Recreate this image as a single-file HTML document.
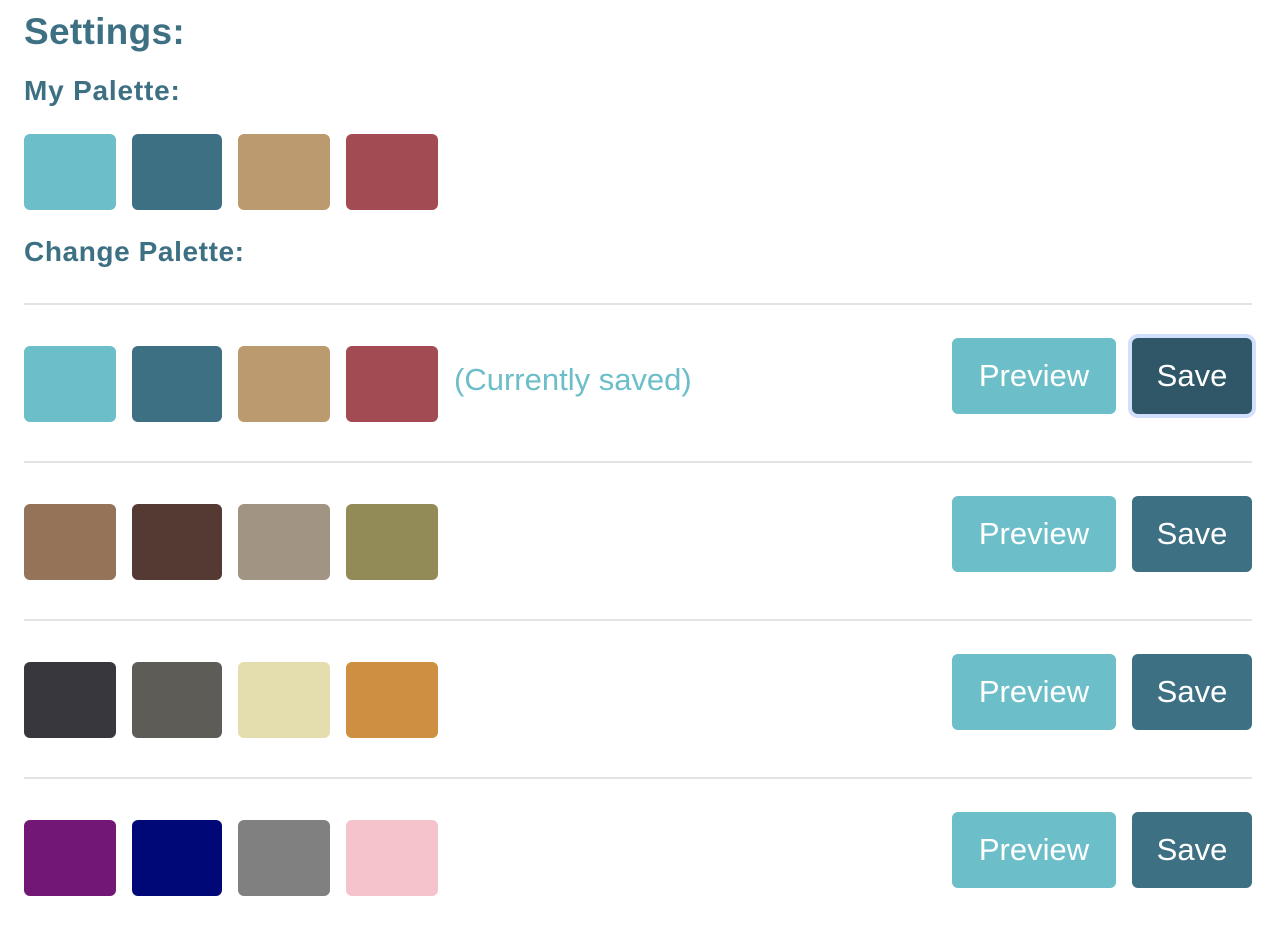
<!DOCTYPE html>
<html><head><style>
body{margin:0;width:1278px;height:926px;background:#fff;font-family:"Liberation Sans",sans-serif;position:relative;overflow:hidden}
.a{position:absolute}
h{position:absolute;left:24px;color:#3d7083;font-weight:bold;white-space:nowrap}
.s{position:absolute;height:76px;border-radius:6px}
.hr{position:absolute;left:24px;width:1228px;height:2px;background:#e3e3e3}
.b{position:absolute;height:76px;border-radius:6px;color:#fff;font-size:31px;display:flex;align-items:center;justify-content:center}
.p{width:164px;left:952px;background:#6cbec9}
.v{width:120px;left:1132px;background:#3d7083}
</style></head><body>
<h style="top:11px;font-size:37px;letter-spacing:0.3px">Settings:</h>
<h style="top:75px;font-size:28px;letter-spacing:0.8px">My Palette:</h>
<div class="s" style="left:24px;top:134px;width:92px;background:#6cbec9"></div>
<div class="s" style="left:132px;top:134px;width:90px;background:#3d7083"></div>
<div class="s" style="left:238px;top:134px;width:92px;background:#ba9a6e"></div>
<div class="s" style="left:346px;top:134px;width:92px;background:#a34b52"></div>
<h style="top:236px;font-size:28px;letter-spacing:0.6px">Change Palette:</h>

<div class="hr" style="top:303px"></div>
<div class="s" style="left:24px;top:346px;width:92px;background:#6cbec9"></div>
<div class="s" style="left:132px;top:346px;width:90px;background:#3d7083"></div>
<div class="s" style="left:238px;top:346px;width:92px;background:#ba9a6e"></div>
<div class="s" style="left:346px;top:346px;width:92px;background:#a34b52"></div>
<div class="a" style="left:454px;top:362px;font-size:31px;color:#6cbec9">(Currently saved)</div>
<div class="b p" style="top:338px">Preview</div>
<div class="b v" style="top:338px;background:#2f5767;box-shadow:0 0 0 4px #cfdffc">Save</div>

<div class="hr" style="top:461px"></div>
<div class="s" style="left:24px;top:504px;width:92px;background:#957359"></div>
<div class="s" style="left:132px;top:504px;width:90px;background:#553933"></div>
<div class="s" style="left:238px;top:504px;width:92px;background:#a19483"></div>
<div class="s" style="left:346px;top:504px;width:92px;background:#928a57"></div>
<div class="b p" style="top:496px">Preview</div>
<div class="b v" style="top:496px">Save</div>

<div class="hr" style="top:619px"></div>
<div class="s" style="left:24px;top:662px;width:92px;background:#38373d"></div>
<div class="s" style="left:132px;top:662px;width:90px;background:#5e5c57"></div>
<div class="s" style="left:238px;top:662px;width:92px;background:#e4ddae"></div>
<div class="s" style="left:346px;top:662px;width:92px;background:#cf8f43"></div>
<div class="b p" style="top:654px">Preview</div>
<div class="b v" style="top:654px">Save</div>

<div class="hr" style="top:777px"></div>
<div class="s" style="left:24px;top:820px;width:92px;background:#731776"></div>
<div class="s" style="left:132px;top:820px;width:90px;background:#000878"></div>
<div class="s" style="left:238px;top:820px;width:92px;background:#808080"></div>
<div class="s" style="left:346px;top:820px;width:92px;background:#f5c3cc"></div>
<div class="b p" style="top:812px">Preview</div>
<div class="b v" style="top:812px">Save</div>
</body></html>
